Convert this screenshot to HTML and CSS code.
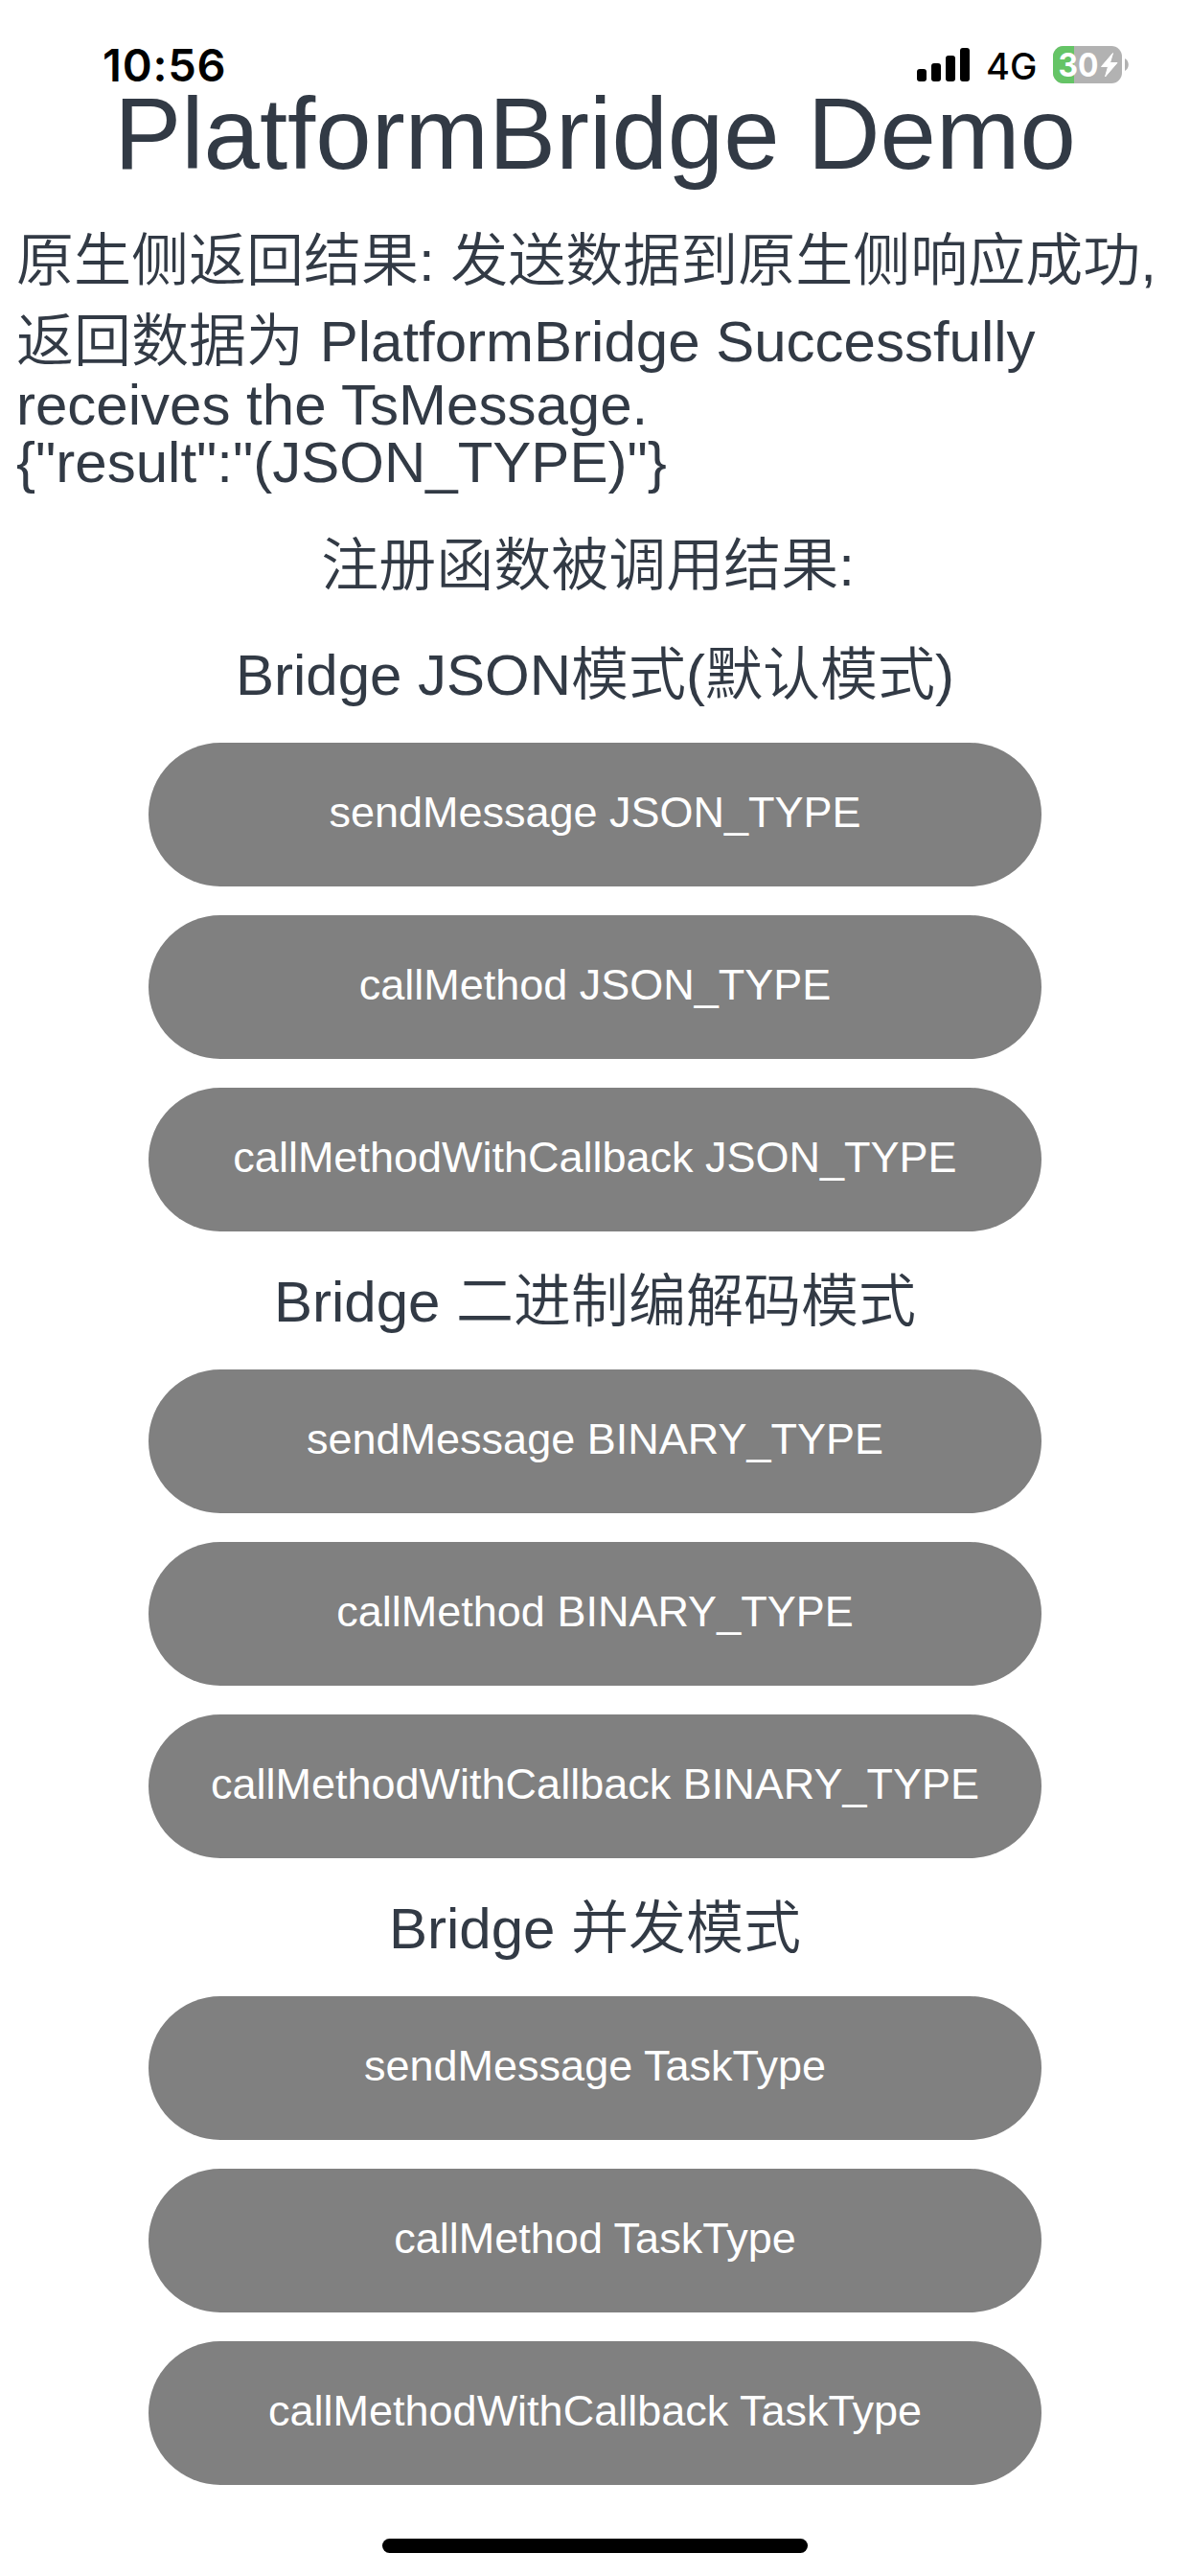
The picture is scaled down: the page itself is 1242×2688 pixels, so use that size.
FILE: index.html
```html
<!DOCTYPE html>
<html lang="zh-CN">
<head>
<meta charset="utf-8">
<title>PlatformBridge Demo</title>
<link rel="stylesheet" href="styles.css">
</head>
<body>
<header class="status">
  <span class="time">10:56</span>
  <div class="indicators">
    <svg class="signal" width="55" height="35" viewBox="0 0 55 35">
      <rect x="0" y="22" width="10" height="13" rx="3"/>
      <rect x="15" y="16" width="10" height="19" rx="3"/>
      <rect x="30" y="8" width="10" height="27" rx="3"/>
      <rect x="45" y="0" width="10" height="35" rx="3"/>
    </svg>
    <span class="network">4G</span>
    <svg class="battery" width="79" height="39" viewBox="0 0 79 39">
      <rect width="72" height="39" rx="11" fill="#b2b2b2"/>
      <path d="M11 0H22V39H11A11 11 0 0 1 0 28V11A11 11 0 0 1 11 0Z" fill="#65c466"/>
      <path d="M75 13C80 15.500 80 23.500 75 26Z" fill="#b2b2b2"/>
      <text class="level" x="5.500" y="32" textLength="42" lengthAdjust="spacingAndGlyphs">30</text>
      <path d="M62.500 7.500L50.500 21.500H57.500L54.500 32L67 17.500H59.500Z" fill="#fff" stroke="#fff" stroke-width="1" stroke-linejoin="round"/>
    </svg>
  </div>
</header>
<main class="page">
  <h1 class="title">PlatformBridge Demo</h1>
  <p class="message">
    <span class="line">原生侧返回结果: 发送数据到原生侧响应成功,</span>
    <span class="line">返回数据为 PlatformBridge Successfully</span>
    <span class="line latin first">receives the TsMessage.</span>
    <span class="line latin">{"result":"(JSON_TYPE)"}</span>
  </p>
  <p class="called">注册函数被调用结果:&nbsp;</p>
  <section class="group">
    <h2 class="heading">Bridge JSON模式(默认模式)</h2>
    <button class="action">sendMessage JSON_TYPE</button>
    <button class="action">callMethod JSON_TYPE</button>
    <button class="action">callMethodWithCallback JSON_TYPE</button>
  </section>
  <section class="group">
    <h2 class="heading">Bridge 二进制编解码模式</h2>
    <button class="action">sendMessage BINARY_TYPE</button>
    <button class="action">callMethod BINARY_TYPE</button>
    <button class="action">callMethodWithCallback BINARY_TYPE</button>
  </section>
  <section class="group">
    <h2 class="heading">Bridge 并发模式</h2>
    <button class="action">sendMessage TaskType</button>
    <button class="action">callMethod TaskType</button>
    <button class="action">callMethodWithCallback TaskType</button>
  </section>
</main>
<div class="home"></div>
</body>
</html>
```
FILE: styles.css
```css
* { box-sizing: border-box; margin: 0; padding: 0; }

body {
  display: flex;
  flex-direction: column;
  height: 2688px;
  background: #fff;
  color: #323a45;
  font-family: "Liberation Sans", "Noto Sans CJK SC", sans-serif;
  font-weight: 400;
  overflow: hidden;
}

.status {
  display: flex;
  justify-content: space-between;
  align-items: flex-start;
  height: 87px;
  padding: 48px 64px 0 107px;
  color: #000;
  font-family: Inter, sans-serif;
}

.time {
  font-size: 47px;
  font-weight: 600;
  letter-spacing: 0.8px;
  line-height: 40px;
}

.indicators { display: flex; align-items: flex-start; }
.signal { margin: 2px 17px 0 0; }
.network {
  width: 70px;
  font-size: 38px;
  font-weight: 450;
  line-height: 43px;
}
.battery { display: block; }
.level { fill: #fff; font: 700 34px Inter, sans-serif; }

.page { display: flex; flex-direction: column; align-items: center; }

.title { font-size: 105px; font-weight: 400; line-height: 106px; }

.message {
  align-self: stretch;
  margin-top: 38px;
  padding: 0 17px;
  font-size: 60px;
  font-weight: 350;
}
.line { display: block; line-height: 84px; white-space: nowrap; }
.latin { line-height: 60px; }
.first { margin-top: -6px; }

.called {
  margin-top: 36px;
  padding-left: 2px;
  font-size: 60px;
  font-weight: 350;
  line-height: 84px;
}

.group {
  display: flex;
  flex-direction: column;
  align-items: center;
  gap: 30px;
  width: 75%;
  padding-top: 32px;
}
.called + .group { padding-top: 30px; }

.heading {
  margin-bottom: -2px;
  font-size: 60px;
  font-weight: 350;
  line-height: 84px;
  white-space: nowrap;
}

.action {
  width: 100%;
  height: 150px;
  padding-bottom: 5px;
  border: 0;
  border-radius: 75px;
  background: #808080;
  color: #fff;
  font: 45px/145px "Liberation Sans", sans-serif;
}

.home {
  width: 444px;
  height: 15px;
  margin: auto auto 24px;
  border-radius: 8px;
  background: #000;
}
```
